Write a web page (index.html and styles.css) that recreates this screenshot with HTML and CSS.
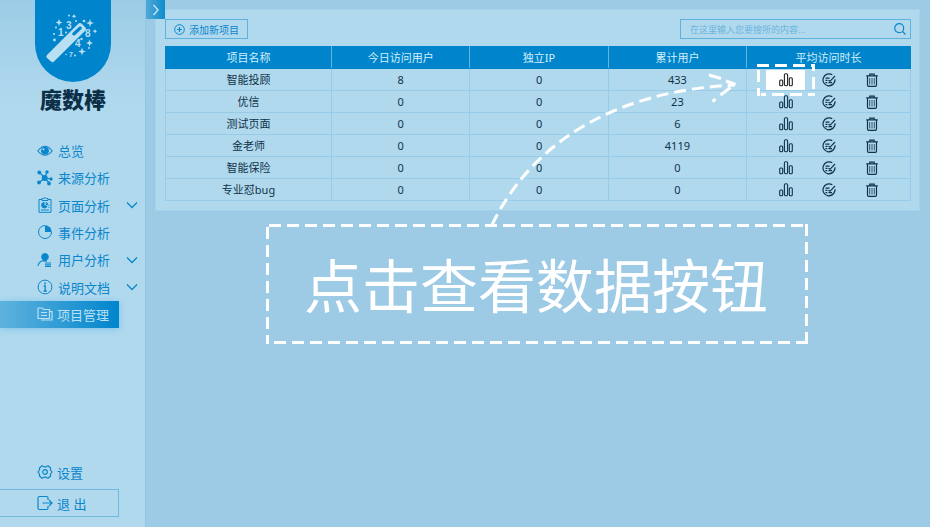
FILE: index.html
```html
<!DOCTYPE html>
<html lang="zh-CN">
<head>
<meta charset="utf-8">
<title>魔数棒</title>
<link rel="stylesheet" href="styles.css">
</head>
<body>
<svg class="defs" aria-hidden="true">
  <symbol id="chart" viewBox="0 0 14 14"><g fill="none" stroke="currentColor" stroke-width="1.100"><rect x=".7" y="7" width="3" height="5.800" rx="1"/><rect x="5.400" y=".8" width="3.200" height="12" rx="1.200"/><rect x="10.300" y="4.800" width="3" height="8" rx="1"/></g></symbol>
  <symbol id="edit" viewBox="0 0 14 14"><g fill="none" stroke="currentColor" stroke-width="1.200"><path d="M10.300 1.800A6 6 0 1 0 13 6.200M5 12.700Q11 13.500 12.800 8"/><path d="M6.500 7.200 8 8.300 13 3M6.500 9.600h3.500M3.500 5.200h4M3.500 7.400h2M3.500 9.600h1.800"/></g></symbol>
  <symbol id="trash" viewBox="0 0 14 14"><g fill="none" stroke="currentColor"><path stroke-width="1.200" d="M1.200 2.800h11.600M4.800 2.500V1.200h4.400v1.300M2.500 3.500v8.500q0 1.300 1.200 1.300h6.600q1.200 0 1.200-1.300V3.500"/><path stroke-width=".8" d="M4.700 5v6.500M7 5v6.500M9.300 5v6.500"/></g></symbol>
  <symbol id="down" viewBox="0 0 12 8"><path d="M1 1.500 6 6.500 11 1.500" fill="none" stroke="currentColor" stroke-width="1.300"/></symbol>
</svg>
<div class="app">
  <aside class="sidebar">
    <div class="logo">
      <svg viewBox="0 0 76 76" aria-hidden="true">
        <g fill="currentColor">
          <path fill-rule="evenodd" d="M12 50 43 19q2-2 4 0l3 3q2 2 0 4L19 56.500q-1.500 1.500-3 0L12 53q-1.500-1.500 0-3ZM37.500 28q-1 2.500 2 2.500L46.500 24q1-3-2-2.500Z"/>
          <path d="m24 14 1 2.500 2.500 1-2.500 1-1 2.500-1-2.500-2.500-1 2.500-1ZM55 14l1 3 3 1-3 1-1 3-1-3-3-1 3-1ZM47 42.500l1 3 3 1-3 1-1 3-1-3-3-1 3-1ZM54.500 34.500l1 2.500 2.500 1-2.500 1-1 2.500-1-2.500-2.500-1 2.500-1ZM39 9l.7 1.500 1.700.7-1.700.7-.7 1.600-.7-1.600-1.700-.7 1.700-.7ZM60 24l.7 1.500 1.500.7-1.500.7-.7 1.600-.7-1.600-1.500-.7 1.500-.7Z"/>
          <circle cx="34" cy="10.500" r="1"/><circle cx="21" cy="22.500" r="1"/><circle cx="19" cy="29" r="1"/><circle cx="19.500" cy="35" r="1.400"/><circle cx="31" cy="27.500" r="1"/><circle cx="49" cy="16" r="1.300"/><circle cx="46.500" cy="34" r="1.200"/><circle cx="54" cy="43" r="1"/><circle cx="40" cy="50.500" r="1"/><circle cx="31" cy="49.500" r=".8"/><circle cx="41" cy="16" r="1"/>
        </g>
        <g class="digits"><text x="31" y="23.500">3</text><text x="23" y="31">1</text><text x="50" y="32">8</text><text x="40" y="42">4</text><text class="tiny" x="34" y="52">7</text></g>
      </svg>
    </div>
    <h1 class="brand">魔数棒</h1>
    <nav class="menu">
      <a href="#"><svg viewBox="0 0 16 16"><path d="M.8 8Q8-1.500 15.200 8 8 16.500.8 8Z" fill="none" stroke="currentColor" stroke-width="1.100"/><path fill="currentColor" fill-rule="evenodd" d="M8 3.800a4 4 0 1 0 .01 0ZM6.500 5.200a1 1 0 1 1-.01 0Z"/></svg>总览</a>
      <a href="#"><svg viewBox="0 0 16 16"><path d="M2.500 2.500 8 8l6 1M10 1.500 8 8l4.500 5.500M8 8 2 12.500" fill="none" stroke="currentColor" stroke-width="1.200"/><g fill="currentColor"><circle cx="7.700" cy="8" r="3"/><circle cx="2.300" cy="2.500" r="1.900"/><circle cx="10" cy="2" r="1.700"/><circle cx="14" cy="9" r="1.700"/><circle cx="12" cy="13.500" r="1.900"/><circle cx="2" cy="12.500" r="1.900"/></g></svg>来源分析</a>
      <a href="#"><svg viewBox="0 0 16 16"><path d="M5 2.500H2v12.800h12V2.500h-3M5 3.500h6V1.500H9.500Q8-.3 6.500 1.500H5Z" fill="none" stroke="currentColor"/><path d="M7.500 5A3.200 3.200 0 1 0 10.500 9L7.500 8Z" fill="currentColor"/><path d="M9 5.500q2 .5 2 2H9ZM11.500 8.500h1M11.500 10.500h1M4 13h8" fill="none" stroke="currentColor"/></svg>页面分析<svg class="arrow"><use href="#down"/></svg></a>
      <a href="#"><svg viewBox="0 0 16 16"><path d="M8 1.500A6.500 6.500 0 1 0 14.500 8" fill="none" stroke="currentColor"/><path d="M8 8V1.200A6.800 6.800 0 0 1 14.800 8Z" fill="currentColor"/></svg>事件分析</a>
      <a href="#"><svg viewBox="0 0 16 16"><path d="M8 1a3.800 3.800 0 0 0-2 7v1.500h4V8a3.800 3.800 0 0 0-2-7Z" fill="currentColor"/><path d="M6.500 8.500Q1.500 9.500 1 14M8 11h6M8 12.700h6M8 14.400h6" fill="none" stroke="currentColor" stroke-width="1.100"/></svg>用户分析<svg class="arrow"><use href="#down"/></svg></a>
      <a href="#"><svg viewBox="0 0 16 16"><circle cx="8" cy="8" r="6.900" fill="none" stroke="currentColor"/><circle cx="8" cy="4.600" r="1" fill="currentColor"/><path d="M6.700 7h1.500v5M6.500 12h3.200" fill="none" stroke="currentColor" stroke-width="1.300"/></svg>说明文档<svg class="arrow"><use href="#down"/></svg></a>
      <a href="#" class="active" aria-current="page"><svg viewBox="0 0 16 16"><path d="M1 12.500V2h4.500l1 1.500h6v9ZM13 5.500h2V14H4M4 6.500h6M4 9.500h6" fill="none" stroke="currentColor" stroke-width="1.200"/></svg>项目管理</a>
    </nav>
    <div class="foot">
      <a href="#" class="settings"><svg viewBox="0 0 16 16"><path d="M5 1.800 7 2.800h2l2-1L13.500 4v2L15 8l-1.500 2v2L11 14.200l-2-1H7l-2 1L2.500 12v-2L1 8l1.500-2V4Z" fill="none" stroke="currentColor" stroke-width="1.200" stroke-linejoin="round"/><circle cx="8" cy="8" r="2.300" fill="none" stroke="currentColor" stroke-width="1.200"/></svg>设置</a>
      <a href="#" class="logout"><svg viewBox="0 0 16 16"><path d="M11 5V3q0-1.500-1.500-1.500h-7Q1 1.500 1 3v10q0 1.500 1.500 1.500h7Q11 14.500 11 13v-2M5.500 8h9.500M12 5l3 3-3 3" fill="none" stroke="currentColor" stroke-width="1.200"/></svg>退 出</a>
    </div>
  </aside>
  <main class="main">
    <button class="toggle" aria-label="展开"><svg viewBox="0 0 8 12"><path d="m1.500 1 4.500 5-4.500 5" fill="none" stroke="currentColor" stroke-width="1.400"/></svg></button>
    <section class="panel">
      <div class="toolbar">
        <button class="add"><svg viewBox="0 0 11 11"><circle cx="5.500" cy="5.500" r="4.800" fill="none" stroke="currentColor"/><path d="M3 5.500h5M5.500 3v5" stroke="currentColor" stroke-width="1.200"/></svg>添加新项目</button>
        <label class="search"><input type="search" aria-label="搜索" placeholder="在这里输入您要搜所的内容..."><svg viewBox="0 0 12 12"><circle cx="5.200" cy="5.200" r="4.500" fill="none" stroke="currentColor" stroke-width="1.200"/><path d="m8.500 8.500 3 3" stroke="currentColor" stroke-width="1.200"/></svg></label>
      </div>
      <table>
        <colgroup><col class="c-name"><col class="c-num"><col class="c-num"><col class="c-num"><col class="c-act"></colgroup>
        <thead><tr><th>项目名称</th><th>今日访问用户</th><th>独立IP</th><th>累计用户</th><th>平均访问时长</th></tr></thead>
        <tbody>
          <tr><td>智能投顾</td><td>8</td><td>0</td><td>433</td><td><div class="actions"><button class="picked" aria-label="数据"><svg><use href="#chart"/></svg><svg class="marquee" viewBox="0 0 58 32" aria-hidden="true"><path d="M0 1.500h12m6 0h12m6 0h12m6 0h4M4 30.500h5m6 0h12m6 0h12m6 0h7M1.500 6v12m0 6v8M56.500 0v7m0 6v12m0 4v3"/></svg></button><button aria-label="编辑"><svg><use href="#edit"/></svg></button><button aria-label="删除"><svg><use href="#trash"/></svg></button></div></td></tr>
          <tr><td>优信</td><td>0</td><td>0</td><td>23</td><td><div class="actions"><button aria-label="数据"><svg><use href="#chart"/></svg></button><button aria-label="编辑"><svg><use href="#edit"/></svg></button><button aria-label="删除"><svg><use href="#trash"/></svg></button></div></td></tr>
          <tr><td>测试页面</td><td>0</td><td>0</td><td>6</td><td><div class="actions"><button aria-label="数据"><svg><use href="#chart"/></svg></button><button aria-label="编辑"><svg><use href="#edit"/></svg></button><button aria-label="删除"><svg><use href="#trash"/></svg></button></div></td></tr>
          <tr><td>金老师</td><td>0</td><td>0</td><td>4119</td><td><div class="actions"><button aria-label="数据"><svg><use href="#chart"/></svg></button><button aria-label="编辑"><svg><use href="#edit"/></svg></button><button aria-label="删除"><svg><use href="#trash"/></svg></button></div></td></tr>
          <tr><td>智能保险</td><td>0</td><td>0</td><td>0</td><td><div class="actions"><button aria-label="数据"><svg><use href="#chart"/></svg></button><button aria-label="编辑"><svg><use href="#edit"/></svg></button><button aria-label="删除"><svg><use href="#trash"/></svg></button></div></td></tr>
          <tr><td>专业怼bug</td><td>0</td><td>0</td><td>0</td><td><div class="actions"><button aria-label="数据"><svg><use href="#chart"/></svg></button><button aria-label="编辑"><svg><use href="#edit"/></svg></button><button aria-label="删除"><svg><use href="#trash"/></svg></button></div></td></tr>
        </tbody>
      </table>
    </section>
    <div class="callout">点击查看数据按钮
      <svg class="pointer" viewBox="0 0 250 160" aria-hidden="true"><path stroke-dasharray="12 6" d="M2 155C40 76 120 21 245 15"/><path d="m219 5 12 3.500m5 2.500 9.500 3.500m-5 3-10 7.500m-5 4-3 2.500"/></svg>
    </div>
  </main>
</div>
</body>
</html>
```
FILE: styles.css
```css
* { box-sizing: border-box; }
body {
  margin: 0;
  font-family: "Noto Sans", "Noto Sans CJK SC", sans-serif;
  font-size: 11px;
  color: #0f3349;
}
a { color: inherit; text-decoration: none; }
button { font: inherit; color: inherit; background: none; border: 0; padding: 0; }
svg { display: block; flex: none; }
.defs { position: absolute; width: 0; height: 0; }

.app { display: flex; min-height: 100vh; background: #9dcbe5; }

.sidebar {
  flex: 0 0 145px;
  display: flex;
  flex-direction: column;
  background: linear-gradient(#9ccde7, #b1d9ee 110px);
  color: #0a86cc;
  font-size: 13px;
}
.logo {
  width: 76px;
  height: 82px;
  margin-left: 35px;
  padding-top: 5px;
  border-radius: 0 0 38px 38px;
  background: #0085cc;
  color: #b9dff2;
}
.logo svg { width: 76px; height: 76px; }
.digits { fill: currentColor; font: bold 10px "Liberation Sans", sans-serif; }
.digits .tiny { font-size: 7px; }
.brand {
  margin: 0 0 0 40px;
  font: 900 22px/32px "Noto Sans CJK SC", sans-serif;
  color: #0c2f48;
}
.menu {
  display: grid;
  grid-auto-rows: 1fr;
  height: 191px;
  margin-top: 23px;
}
.menu a, .foot a {
  display: flex;
  align-items: center;
  gap: 5px;
  width: 119px;
  padding-left: 37px;
  white-space: nowrap;
}
.menu a { width: auto; }
.menu svg, .foot svg { width: 16px; height: 16px; }
.menu .arrow { width: 12px; height: 8px; margin: 0 7px 0 auto; }
.menu .active {
  width: 119px;
  gap: 4px;
  color: #b9e0f3;
  background: linear-gradient(90deg, #5fb2de, #0085cc);
  box-shadow: 0 1px 8px #7cc4ea;
}
.foot { margin-top: auto; padding-bottom: 10px; }
.foot a { height: 28px; gap: 4px; }
.foot .settings { margin-bottom: 3px; }
.foot .logout { border: 1px solid #70bade; border-left: 0; }

.main {
  flex: 1;
  min-width: 0;
  position: relative;
  padding: 9px 10px 0 9px;
  border-left: 1px solid #92c7e2;
  border-right: 1px solid #fff;
}
.toggle {
  position: absolute;
  top: 0;
  left: 0;
  width: 19px;
  height: 19px;
  display: grid;
  place-items: center;
  background: linear-gradient(90deg, #50a9d8, #0f8ccd);
  color: #c5e6f6;
}
.toggle svg { width: 8px; height: 12px; }

.panel {
  padding: 9px 8px 9px 9px;
  border: 1px solid #a3d3ec;
  background: #b1d9ee;
}
.toolbar { display: flex; justify-content: space-between; margin-bottom: 7px; }
.add {
  display: flex;
  align-items: center;
  gap: 4px;
  height: 20px;
  padding: 0 8px;
  border: 1px solid #5eb3de;
  color: #0a86cc;
  font-size: 10px;
}
.add svg { width: 11px; height: 11px; }
.search {
  display: flex;
  align-items: center;
  width: 231px;
  height: 20px;
  padding: 0 4px 0 9px;
  border: 1px solid #5eb3de;
  color: #0a86cc;
}
.search input {
  flex: 1;
  min-width: 0;
  padding: 0;
  border: 0;
  outline: 0;
  background: none;
  font: inherit;
  font-size: 9px;
  color: inherit;
}
.search input::placeholder { color: #6bb5dc; }
.search svg { width: 12px; height: 12px; }

table { width: 100%; table-layout: fixed; border-collapse: collapse; }
.c-name { width: 166px; }
.c-act { width: 22%; }
th, td {
  height: 22px;
  padding: 0;
  border: 1px solid #96ccea;
  text-align: center;
  font-weight: 400;
  line-height: 16px;
}
th {
  background: #0085cc;
  border-color: #0085cc #62b5e0;
  color: #d4eefa;
}
th:first-child { border-left-color: #0085cc; }
th:last-child { border-right-color: #0085cc; }
.actions { display: flex; justify-content: center; gap: 4px; }
.actions button {
  position: relative;
  display: grid;
  place-items: center;
  width: 39px;
  height: 20px;
}
.actions svg { width: 14px; height: 14px; }
.actions .picked { background: #fff; color: #222; }
.actions .marquee {
  position: absolute;
  top: -6px;
  left: -9px;
  width: 58px;
  height: 32px;
  fill: none;
  stroke: #fff;
  stroke-width: 3;
}

.callout {
  --dash: #fff 0 12px, transparent 12px 18px;
  position: relative;
  width: 542px;
  max-width: 100%;
  margin: 13px 0 0 111px;
  padding: 17px 2px 19px 0;
  text-align: center;
  white-space: nowrap;
  font: 58px/84px "Noto Sans CJK SC", sans-serif;
  color: #fff;
  background:
    repeating-linear-gradient(90deg, var(--dash)) 3px 0 / 100% 3px no-repeat,
    repeating-linear-gradient(270deg, var(--dash)) 100% 100% / calc(100% - 8px) 3px no-repeat,
    repeating-linear-gradient(180deg, var(--dash)) 0 3px / 3px 100% no-repeat,
    repeating-linear-gradient(180deg, var(--dash)) 100% 0 / 3px 100% no-repeat;
}
.pointer {
  position: absolute;
  left: 224px;
  top: -154px;
  width: 250px;
  height: 160px;
  fill: none;
  stroke: #fff;
  stroke-width: 3;
  pointer-events: none;
}
```
